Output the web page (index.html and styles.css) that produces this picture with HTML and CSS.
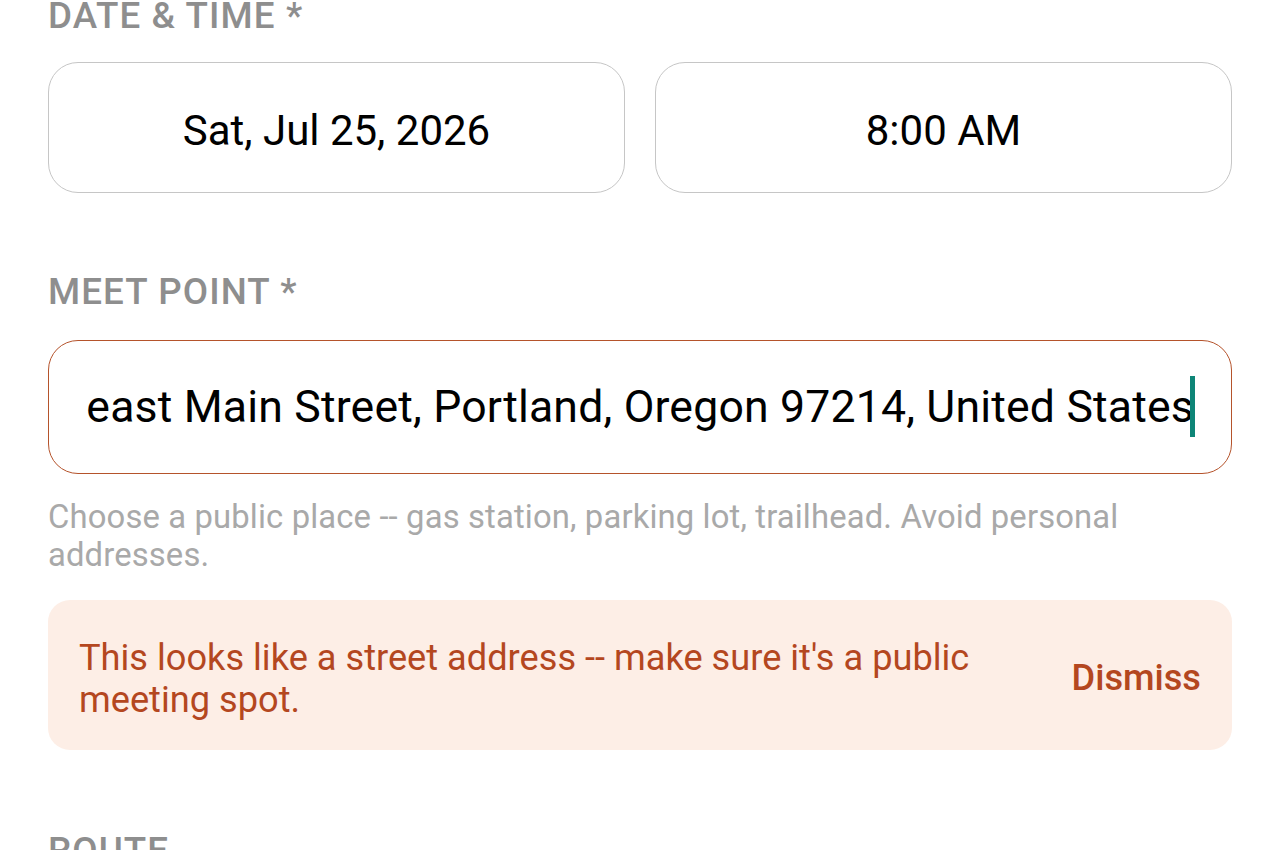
FILE: index.html
```html
<!DOCTYPE html>
<html lang="en">
<head>
<meta charset="utf-8">
<title>Meet details</title>
<link rel="stylesheet" href="styles.css">
</head>
<body>
<main class="form">
  <section class="field field-first">
    <div class="label">DATE &amp; TIME *</div>
    <div class="row">
      <div class="picker">Sat, Jul 25, 2026</div>
      <div class="picker">8:00 AM</div>
    </div>
  </section>

  <section class="field field-meet">
    <div class="label">MEET POINT *</div>
    <div class="input input-warn">
      <div class="input-clip">
        <span class="input-text">1234 Southeast Main Street, Portland, Oregon 97214, United States</span><span class="caret"></span>
      </div>
    </div>
    <p class="helper">Choose a public place -- gas station, parking lot, trailhead. Avoid personal addresses.</p>
    <div class="notice">
      <p class="notice-text">This looks like a street address -- make sure it's a public meeting spot.</p>
      <button class="notice-btn" type="button">Dismiss</button>
    </div>
  </section>

  <section class="field field-route">
    <div class="label">ROUTE</div>
  </section>
</main>
</body>
</html>
```

FILE: styles.css
```css
html, body {
  margin: 0;
  padding: 0;
  background: #ffffff;
}

body {
  font-family: Roboto, "Noto Sans", "Liberation Sans", sans-serif;
  color: #000;
  overflow: hidden;
  height: 850px;
}

.form {
  padding: 0 48px;
  margin-top: -6px;
}

.label {
  font-size: 36.75px;
  line-height: 43px;
  font-weight: 500;
  color: #8e8e8e;
  letter-spacing: 1.1px;
}

.field-first .label {
  margin-bottom: 25px;
}

.row {
  display: flex;
  gap: 30px;
}

.picker {
  flex: 1;
  height: 131px;
  box-sizing: border-box;
  border: 1.5px solid #c6c6c6;
  border-radius: 30px;
  display: flex;
  align-items: center;
  justify-content: center;
  padding-top: 5px;
  font-size: 42px;
  color: #000;
}

.field-meet {
  margin-top: 77px;
}

.field-meet .label {
  margin-bottom: 27px;
}

.input {
  height: 134px;
  box-sizing: border-box;
  border: 1.5px solid #b5532b;
  border-radius: 30px;
  display: flex;
  align-items: center;
  padding: 0 36px 0 35px;
  font-size: 44.6px;
  letter-spacing: 0.17px;
  white-space: nowrap;
}

.input-clip {
  flex: 1;
  min-width: 0;
  display: flex;
  align-items: center;
  justify-content: flex-end;
  overflow: hidden;
  height: 70px;
}

.input-text {
  flex: none;
}

.caret {
  flex: none;
  display: inline-block;
  width: 5px;
  height: 61px;
  background: #0e8577;
  margin-left: -4px;
  margin-top: -2px;
}

.helper {
  margin: 24px 0 0;
  font-size: 32.8px;
  letter-spacing: 0.14px;
  line-height: 38px;
  color: #a9a9a9;
}

.notice {
  margin-top: 26px;
  background: #fdeee6;
  border-radius: 22px;
  padding: 37px 31px 29px 31px;
  display: flex;
  align-items: center;
  gap: 40px;
}

.notice-text {
  flex: 1;
  margin: 0;
  font-size: 36.2px;
  line-height: 42px;
  color: #b4471f;
}

.notice-btn {
  flex: none;
  border: 0;
  background: none;
  padding: 0;
  margin-top: -3px;
  font-family: inherit;
  font-size: 36.2px;
  font-weight: 500;
  color: #b4471f;
  cursor: pointer;
}

.field-route {
  margin-top: 79px;
}
```
